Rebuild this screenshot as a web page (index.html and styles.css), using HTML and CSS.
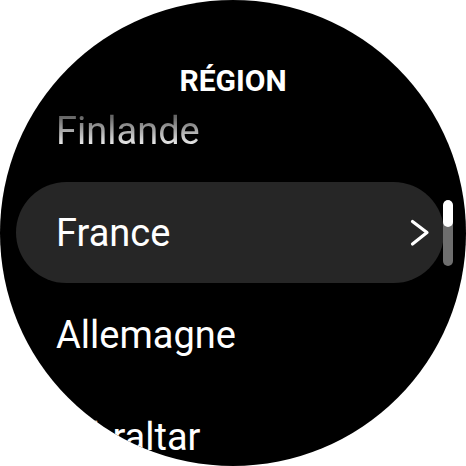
FILE: index.html
```html
<!DOCTYPE html>
<html>
<head>
<meta charset="utf-8">
<link rel="stylesheet" href="styles.css">
</head>
<body>
<div class="watch">
  <header class="title">RÉGION</header>
  <ul class="list">
    <li class="row faded"><span class="label">Finlande</span></li>
    <li class="row selected">
      <span class="label">France</span>
      <svg class="chev" width="20" height="28" viewBox="0 0 20 28"><polyline points="2.5,2.5 17,13.5 2.5,25" fill="none" stroke="#fff" stroke-width="3.2" stroke-linecap="round" stroke-linejoin="round"/></svg>
    </li>
    <li class="row"><span class="label">Allemagne</span></li>
    <li class="row"><span class="label">Gibraltar</span></li>
  </ul>
  <div class="scrollbar"><div class="thumb"></div></div>
</div>
</body>
</html>
```

FILE: styles.css
```css
html, body {
  margin: 0;
  padding: 0;
  background: #fff;
}
.watch {
  position: relative;
  width: 466px;
  height: 466px;
  border-radius: 50%;
  background: #000;
  overflow: hidden;
  font-family: Roboto, "Liberation Sans", sans-serif;
  color: #fff;
}
.title {
  height: 80px;
  box-sizing: border-box;
  padding-top: 66px;
  font-size: 30px;
  line-height: 30px;
  font-weight: 700;
  text-align: center;
}
.list {
  list-style: none;
  margin: 0;
  padding: 0;
}
.row {
  height: 102px;
  display: flex;
  align-items: center;
  justify-content: space-between;
  padding-left: 56px;
  font-size: 38px;
  line-height: 102px;
}
.row .label {
  display: block;
}
.faded .label {
  background: linear-gradient(to bottom, #666 37px, #f2f2f2 66px);
  -webkit-background-clip: text;
  background-clip: text;
  color: transparent;
}
.selected {
  height: 101px;
  margin: 0 22px 1px 16px;
  padding-left: 40px;
  padding-right: 14px;
  border-radius: 51px;
  background: #262626;
}
.chev {
  display: block;
  margin-top: 1px;
}
.scrollbar {
  position: absolute;
  left: 443px;
  top: 200px;
  width: 10px;
  height: 66px;
  border-radius: 5px;
  background: #6e6e6e;
  overflow: hidden;
}
.thumb {
  height: 27px;
  border-radius: 5px;
  background: #fff;
}
```
